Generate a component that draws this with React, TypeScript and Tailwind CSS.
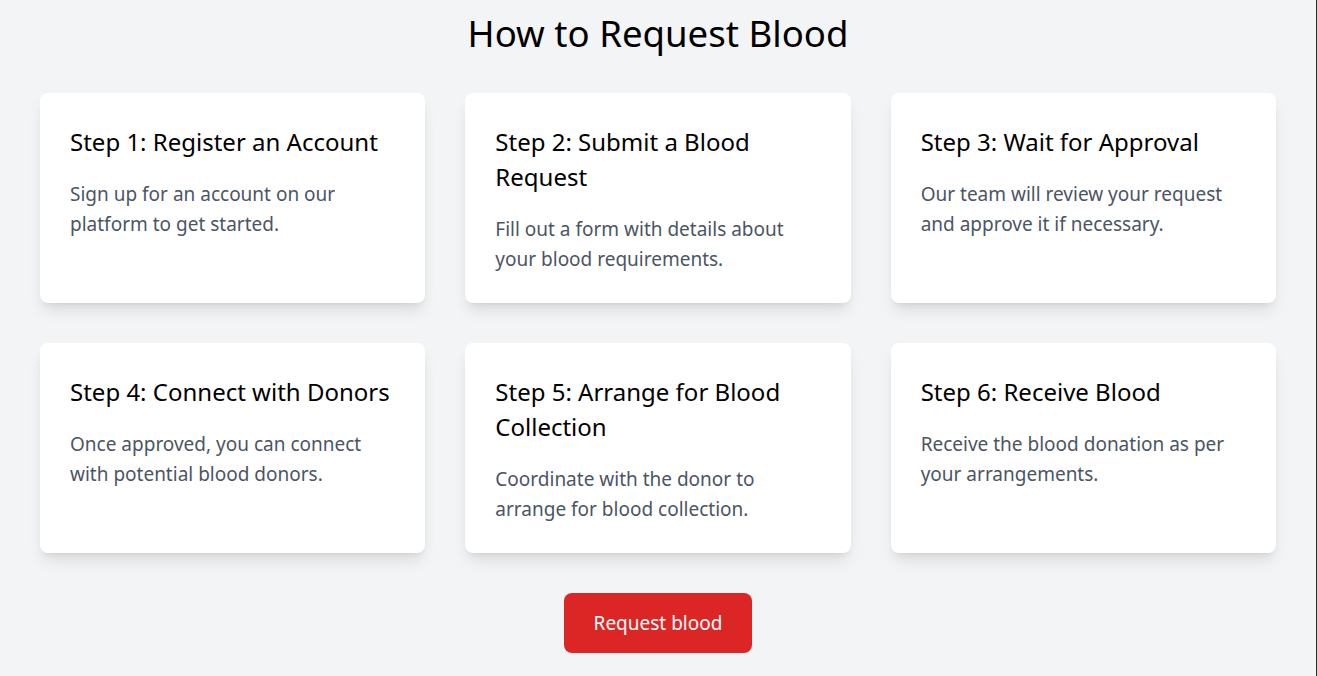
import React from "react";

const steps = [
  { title: "Step 1: Register an Account", desc: "Sign up for an account on our platform to get started." },
  { title: "Step 2: Submit a Blood Request", desc: "Fill out a form with details about your blood requirements." },
  { title: "Step 3: Wait for Approval", desc: "Our team will review your request and approve it if necessary." },
  { title: "Step 4: Connect with Donors", desc: "Once approved, you can connect with potential blood donors." },
  { title: "Step 5: Arrange for Blood Collection", desc: "Coordinate with the donor to arrange for blood collection." },
  { title: "Step 6: Receive Blood", desc: "Receive the blood donation as per your arrangements." },
];

export default function App() {
  return (
    <div className="flex min-h-screen bg-[#f3f4f6] font-['Noto_Sans',sans-serif]">
      <main className="flex-1 px-10 pt-[13px] pb-6">
        <h1 className="text-center text-[36.6px] leading-10 text-black mb-10">How to Request Blood</h1>
        <div className="grid grid-cols-3 gap-10">
          {steps.map((s) => (
            <div key={s.title} className="bg-white rounded-lg shadow-lg px-[30px] pt-[31px] pb-[29px]">
              <h2 className="text-2xl leading-[35px] text-black mb-5">{s.title}</h2>
              <p className="text-[19px] leading-[30px] text-[#4b5563]">{s.desc}</p>
            </div>
          ))}
        </div>
        <div className="flex justify-center mt-10">
          <button className="h-[60px] px-[30px] rounded-lg bg-[#dc2626] text-white text-[19px]">Request blood</button>
        </div>
      </main>
      <div className="w-px bg-[#2b2b2b]"></div>
    </div>
  );
}
